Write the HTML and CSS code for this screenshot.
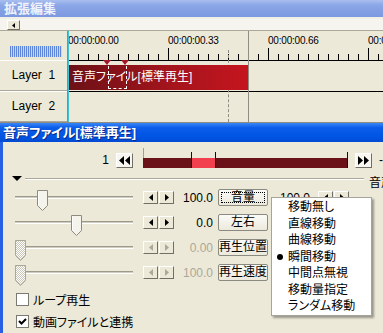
FILE: index.html
```html
<!DOCTYPE html>
<html lang="ja">
<head>
    <meta charset="UTF-8">
    <title>拡張編集</title>
    <link rel="stylesheet" href="styles.css">
</head>
<body>
    <svg class="defs" width="0" height="0">
        <defs>
            <pattern id="hatch" width="2" height="2" patternUnits="userSpaceOnUse">
                <rect width="2" height="2" fill="#ffffff"/>
                <rect width="1" height="1" fill="#c9c6b8"/>
                <rect x="1" y="1" width="1" height="1" fill="#c9c6b8"/>
            </pattern>
        </defs>
    </svg>

    <!-- タイムライン -->
    <div class="win-timeline">
        <div class="title-bar inactive">拡張編集</div>
        <div class="scroll-row">
            <span class="scroll-btn">
                <svg width="3" height="5" viewBox="0 0 3 5"><path d="M3 0V5L0 2.5Z" fill="#000"/></svg>
            </span>
        </div>
        <div class="timeline">
            <div class="layer-col">
                <div class="ruler-left"><div class="meter"></div></div>
                <div class="layer-cell">Layer&nbsp;&nbsp;1</div>
                <div class="layer-cell">Layer&nbsp;&nbsp;2</div>
            </div>
            <div class="tracks">
                <div class="ruler">
                    <span class="time">00:00:00.00</span>
                    <span class="time">00:00:00.33</span>
                    <span class="time">00:00:00.66</span>
                    <span class="time">00:00:01.00</span>
                </div>
                <div class="track"></div>
                <div class="track"></div>

                <div class="guide-dashed"></div>
                <div class="object">音声ファイル[標準再生]</div>
                <div class="guide-end"></div>
                <div class="range-box"></div>
                <div class="marker" style="left: 38px"></div>
                <div class="marker" style="left: 56px"></div>
                <div class="cursor-line"></div>
            </div>
        </div>
    </div>

    <!-- 設定ダイアログ -->
    <div class="win-props">
        <div class="title-bar active">音声ファイル[標準再生]</div>
        <div class="props-body">
            <div class="seek-row">
                <span class="frame-num">1</span>
                <span class="btn skip">
                    <svg width="11" height="9" viewBox="0 0 11 9"><path d="M5 0V9L0 4.5Z M11 0V9L6 4.5Z" fill="#000"/></svg>
                </span>
                <div class="seekbar">
                    <div class="seek-fill"></div>
                    <span class="seek-tick now" style="left: 0px"></span>
                    <span class="seek-tick" style="left: 48px"></span>
                    <span class="seek-tick" style="left: 72px"></span>
                    <span class="seek-tick" style="left: 204px"></span>
                </div>
                <span class="btn skip">
                    <svg width="11" height="9" viewBox="0 0 11 9"><path d="M0 0V9L5 4.5Z M6 0V9L11 4.5Z" fill="#000"/></svg>
                </span>
                <span class="dash">-</span>
            </div>

            <div class="group-row">
                <svg class="fold" width="10" height="5" viewBox="0 0 10 5"><path d="M0 0H10L5 5Z" fill="#000"/></svg>
                <div class="group-line"></div>
                <span class="group-label">音声ファイル</span>
            </div>

            <div class="slider-row">
                <div class="slider">
                    <div class="slider-track"></div>
                    <svg class="thumb" style="left: 22px" width="11" height="21" viewBox="0 0 11 21"><path d="M0.5 0.5H10.5V15.5L5.5 20.5L0.5 15.5Z" fill="#f4f3ec" stroke="#8d8b7f"/><path d="M1.5 1.5V15" stroke="#fff"/></svg>
                </div>
                <span class="btn arrow"><svg width="4" height="7" viewBox="0 0 4 7"><path d="M4 0V7L0 3.5Z"/></svg></span>
                <span class="btn arrow"><svg width="4" height="7" viewBox="0 0 4 7"><path d="M0 0V7L4 3.5Z"/></svg></span>
                <span class="value">100.0</span>
                <span class="btn push focus">音量</span>
                <span class="value end">100.0</span>
                <span class="btn arrow gap"><svg width="4" height="7" viewBox="0 0 4 7"><path d="M4 0V7L0 3.5Z"/></svg></span>
                <span class="btn arrow"><svg width="4" height="7" viewBox="0 0 4 7"><path d="M0 0V7L4 3.5Z"/></svg></span>
            </div>

            <div class="slider-row">
                <div class="slider">
                    <div class="slider-track"></div>
                    <svg class="thumb" style="left: 56px" width="11" height="21" viewBox="0 0 11 21"><path d="M0.5 0.5H10.5V15.5L5.5 20.5L0.5 15.5Z" fill="#f4f3ec" stroke="#8d8b7f"/><path d="M1.5 1.5V15" stroke="#fff"/></svg>
                </div>
                <span class="btn arrow"><svg width="4" height="7" viewBox="0 0 4 7"><path d="M4 0V7L0 3.5Z"/></svg></span>
                <span class="btn arrow"><svg width="4" height="7" viewBox="0 0 4 7"><path d="M0 0V7L4 3.5Z"/></svg></span>
                <span class="value">0.0</span>
                <span class="btn push">左右</span>
            </div>

            <div class="slider-row disabled">
                <div class="slider">
                    <div class="slider-track"></div>
                    <svg class="thumb" style="left: 0px" width="11" height="21" viewBox="0 0 11 21"><path d="M0.5 0.5H10.5V15.5L5.5 20.5L0.5 15.5Z" fill="url(#hatch)" stroke="#a9a79a"/></svg>
                </div>
                <span class="btn arrow"><svg width="4" height="7" viewBox="0 0 4 7"><path d="M4 0V7L0 3.5Z"/></svg></span>
                <span class="btn arrow"><svg width="4" height="7" viewBox="0 0 4 7"><path d="M0 0V7L4 3.5Z"/></svg></span>
                <span class="value">0.00</span>
                <span class="btn push">再生位置</span>
            </div>

            <div class="slider-row disabled">
                <div class="slider">
                    <div class="slider-track"></div>
                    <svg class="thumb" style="left: 0px" width="11" height="21" viewBox="0 0 11 21"><path d="M0.5 0.5H10.5V15.5L5.5 20.5L0.5 15.5Z" fill="url(#hatch)" stroke="#a9a79a"/></svg>
                </div>
                <span class="btn arrow"><svg width="4" height="7" viewBox="0 0 4 7"><path d="M4 0V7L0 3.5Z"/></svg></span>
                <span class="btn arrow"><svg width="4" height="7" viewBox="0 0 4 7"><path d="M0 0V7L4 3.5Z"/></svg></span>
                <span class="value">100.0</span>
                <span class="btn push">再生速度</span>
            </div>

            <label class="check-row">
                <span class="check-box"></span>
                <span>ループ再生</span>
            </label>
            <label class="check-row">
                <span class="check-box">
                    <svg width="11" height="11" viewBox="0 0 11 11"><path d="M2 5L4.5 7.5L9 3" stroke="#000" stroke-width="2" fill="none"/></svg>
                </span>
                <span>動画ファイルと連携</span>
            </label>
        </div>
    </div>

    <!-- 移動方法メニュー -->
    <ul class="popup-menu">
        <li><span class="gutter"></span>移動無し</li>
        <li><span class="gutter"></span>直線移動</li>
        <li><span class="gutter"></span>曲線移動</li>
        <li><span class="gutter"><span class="bullet"></span></span>瞬間移動</li>
        <li><span class="gutter"></span>中間点無視</li>
        <li><span class="gutter"></span>移動量指定</li>
        <li><span class="gutter"></span>ランダム移動</li>
    </ul>
</body>
</html>
```

FILE: styles.css
```css
:root {
    --face: #ece9d8;
    --shadow: #aca899;
    --dark: #716f64;
    --xp-blue: #0054e3;
}

body {
    margin: 0;
    width: 383px;
    height: 333px;
    overflow: hidden;
    position: relative;
    background: var(--face);
    font-family: "Liberation Sans", "Noto Sans CJK JP", sans-serif;
    font-feature-settings: "palt";
    font-size: 12px;
    color: #000;
}

.defs {
    position: absolute;
}

/* タイトルバー */
.title-bar {
    font-size: 13px;
    font-weight: bold;
    white-space: nowrap;
    overflow: hidden;
}

.title-bar.inactive {
    height: 17px;
    line-height: 17px;
    padding-left: 4px;
    color: #eef2fc;
    background: linear-gradient(#a9bff0, #8ca7e7 30%, #7c98e0);
    border-bottom: 2px solid #f1efe6;
}

.title-bar.active {
    height: 19px;
    line-height: 19px;
    padding-left: 3px;
    color: #fff;
    background: linear-gradient(#3a86f8, #0b5ce9 25%, #0054e3 75%, #034ad2);
    text-shadow: 1px 1px #0a2a8a;
}

/* タイムライン */
.scroll-row {
    height: 11px;
    background: #f5f4ee;
    border-bottom: 1px solid var(--shadow);
    display: flex;
    align-items: flex-end;
}

.scroll-btn {
    width: 11px;
    height: 8px;
    margin-left: 7px;
    background: var(--face);
    border: 1px solid;
    border-color: #fff var(--dark) var(--dark) #fff;
    display: flex;
    align-items: center;
    justify-content: center;
}

.timeline {
    display: flex;
    border-bottom: 1px solid #8d8b80;
}

.layer-col {
    width: 67px;
    border-right: 1px solid #8d8b80;
}

.ruler-left {
    height: 29px;
    overflow: hidden;
}

.meter {
    width: 52px;
    height: 11px;
    margin: 15px 0 0 10px;
    background: repeating-linear-gradient(90deg, #5f86d8 0 1px, #c9d6f3 1px 2px);
}

.layer-cell {
    height: 29px;
    line-height: 29px;
    text-align: center;
    border-top: 1px solid #fff;
    border-bottom: 1px solid var(--shadow);
    font-size: 12px;
}

.tracks {
    flex: 1;
    position: relative;
    overflow: hidden;
}

.ruler {
    height: 29px;
    display: flex;
    white-space: nowrap;
    background:
        linear-gradient(90deg, #000 1px, transparent 1px) 0 100% / 100px 12px repeat-x,
        linear-gradient(90deg, #000 1px, transparent 1px) 0 100% / 10px 6px repeat-x;
}

.time {
    flex: none;
    width: 100px;
    margin-top: 4px;
    line-height: 12px;
    font-size: 10px;
    letter-spacing: -0.2px;
}

.track {
    height: 30px;
    border-top: 1px solid #000;
}

.cursor-line {
    position: absolute;
    left: 0;
    top: 0;
    bottom: 0;
    width: 1px;
    background: #3fc4d6;
}

.object {
    position: absolute;
    left: 1px;
    top: 34px;
    width: 176px;
    height: 25px;
    line-height: 25px;
    padding-left: 3px;
    color: #fff;
    white-space: nowrap;
    background: linear-gradient(90deg, #6c1117, #a3141c 55%, #c5151f);
}

.guide-dashed {
    position: absolute;
    left: 160px;
    top: 19px;
    bottom: 0;
    border-left: 1px dashed #8f8d84;
}

.guide-end {
    position: absolute;
    left: 180px;
    top: 0;
    bottom: 0;
    width: 1px;
    background: #8f8d84;
}

.range-box {
    position: absolute;
    left: 40px;
    top: 30px;
    width: 17px;
    height: 27px;
    border: 1px dashed #fff;
    border-top: none;
}

.marker {
    position: absolute;
    top: 29px;
    width: 0;
    height: 0;
    margin-left: -3px;
    border-left: 4px solid transparent;
    border-right: 4px solid transparent;
    border-top: 5px solid #a4182a;
}

/* 設定ダイアログ */
.props-body {
    height: 191px;
    border-left: 3px solid #2860e4;
}

.btn {
    flex: none;
    box-sizing: border-box;
    display: flex;
    align-items: center;
    justify-content: center;
    background: var(--face);
    border: 1px solid;
    border-color: #fff var(--dark) var(--dark) #fff;
}

.seek-row {
    height: 16px;
    padding-top: 10px;
    display: flex;
    align-items: center;
}

.frame-num {
    width: 107px;
    text-align: right;
    line-height: 14px;
}

.btn.skip {
    width: 17px;
    height: 15px;
    margin-left: 7px;
    background: #f7f6f1;
}

.seekbar {
    flex: none;
    width: 205px;
    height: 16px;
    margin-left: 10px;
    position: relative;
    display: flex;
    align-items: flex-end;
}

.seek-fill {
    width: 100%;
    height: 10px;
    background: linear-gradient(90deg, #6b1218 0 49px, #f2404e 49px 72px, #6b1218 72px);
}

.seek-tick {
    position: absolute;
    top: 0;
    bottom: 0;
    width: 1px;
    background: #1a0a0a;
}

.seek-tick.now {
    top: -4px;
    bottom: 10px;
    background: #3fc4d6;
}

.seekbar + .btn.skip {
    margin-left: 7px;
}

.dash {
    margin-left: 7px;
}

.group-row {
    height: 11px;
    margin-top: 6px;
    display: flex;
    align-items: flex-start;
    white-space: nowrap;
}

.fold {
    flex: none;
    margin: 2px 0 0 9px;
}

.group-line {
    width: 339px;
    flex: none;
    margin: 4px 0 0 3px;
    border-top: 1px solid var(--shadow);
    border-bottom: 1px solid #fff;
}

.group-label {
    margin: 3px 0 0 5px;
    line-height: 12px;
}

.slider-row {
    height: 25px;
    display: flex;
    align-items: center;
    white-space: nowrap;
}

.slider {
    flex: none;
    width: 118px;
    height: 25px;
    margin-left: 12px;
    position: relative;
}

.slider-track {
    margin-top: 11px;
    height: 1px;
    border-top: 1px solid #9d9a8b;
    border-bottom: 1px solid #fff;
    background: #cfcdbf;
}

.thumb {
    position: absolute;
    top: 5px;
}

.btn.arrow {
    width: 15px;
    height: 13px;
    margin-left: 1px;
}

.slider + .btn.arrow {
    margin-left: 10px;
}

.btn.arrow.gap {
    margin-left: 8px;
}

.btn.arrow path {
    fill: #000;
}

.value {
    width: 39px;
    text-align: right;
    line-height: 14px;
}

.value.end {
    width: 42px;
}

.btn.push {
    width: 50px;
    height: 17px;
    margin-left: 5px;
    line-height: 15px;
    background: linear-gradient(#fbfbf8, #ece9dc);
    border: 1px solid #8b8a80;
    border-radius: 2px;
}

.btn.push.focus {
    outline: 1px dotted #000;
    outline-offset: -4px;
}

.slider-row.disabled .value {
    color: var(--shadow);
}

.slider-row.disabled .btn.arrow path {
    fill: var(--shadow);
}

.check-row {
    height: 19px;
    display: flex;
    align-items: center;
    margin-left: 13px;
    white-space: nowrap;
}

.check-row:first-of-type {
    margin-top: 5px;
}

.check-row + .check-row {
    margin-top: 3px;
}

.check-box {
    box-sizing: border-box;
    width: 13px;
    height: 13px;
    margin-right: 4px;
    background: #fff;
    border: 1px solid #7a7a72;
    display: flex;
    align-items: center;
    justify-content: center;
}

/* ポップアップメニュー */
.popup-menu {
    position: absolute;
    left: 271px;
    top: 197px;
    width: 99px;
    margin: 0;
    padding: 1px 0 0;
    list-style: none;
    background: #fff;
    border: 1px solid #a6a49a;
    box-shadow: 2px 2px 2px rgba(0, 0, 0, 0.35);
}

.popup-menu li {
    height: 16.5px;
    line-height: 16.5px;
    display: flex;
    align-items: center;
    white-space: nowrap;
}

.gutter {
    width: 16px;
    flex: none;
    display: flex;
    align-items: center;
    padding-left: 5px;
    box-sizing: border-box;
}

.bullet {
    width: 6px;
    height: 6px;
    border-radius: 50%;
    background: #000;
}
```
